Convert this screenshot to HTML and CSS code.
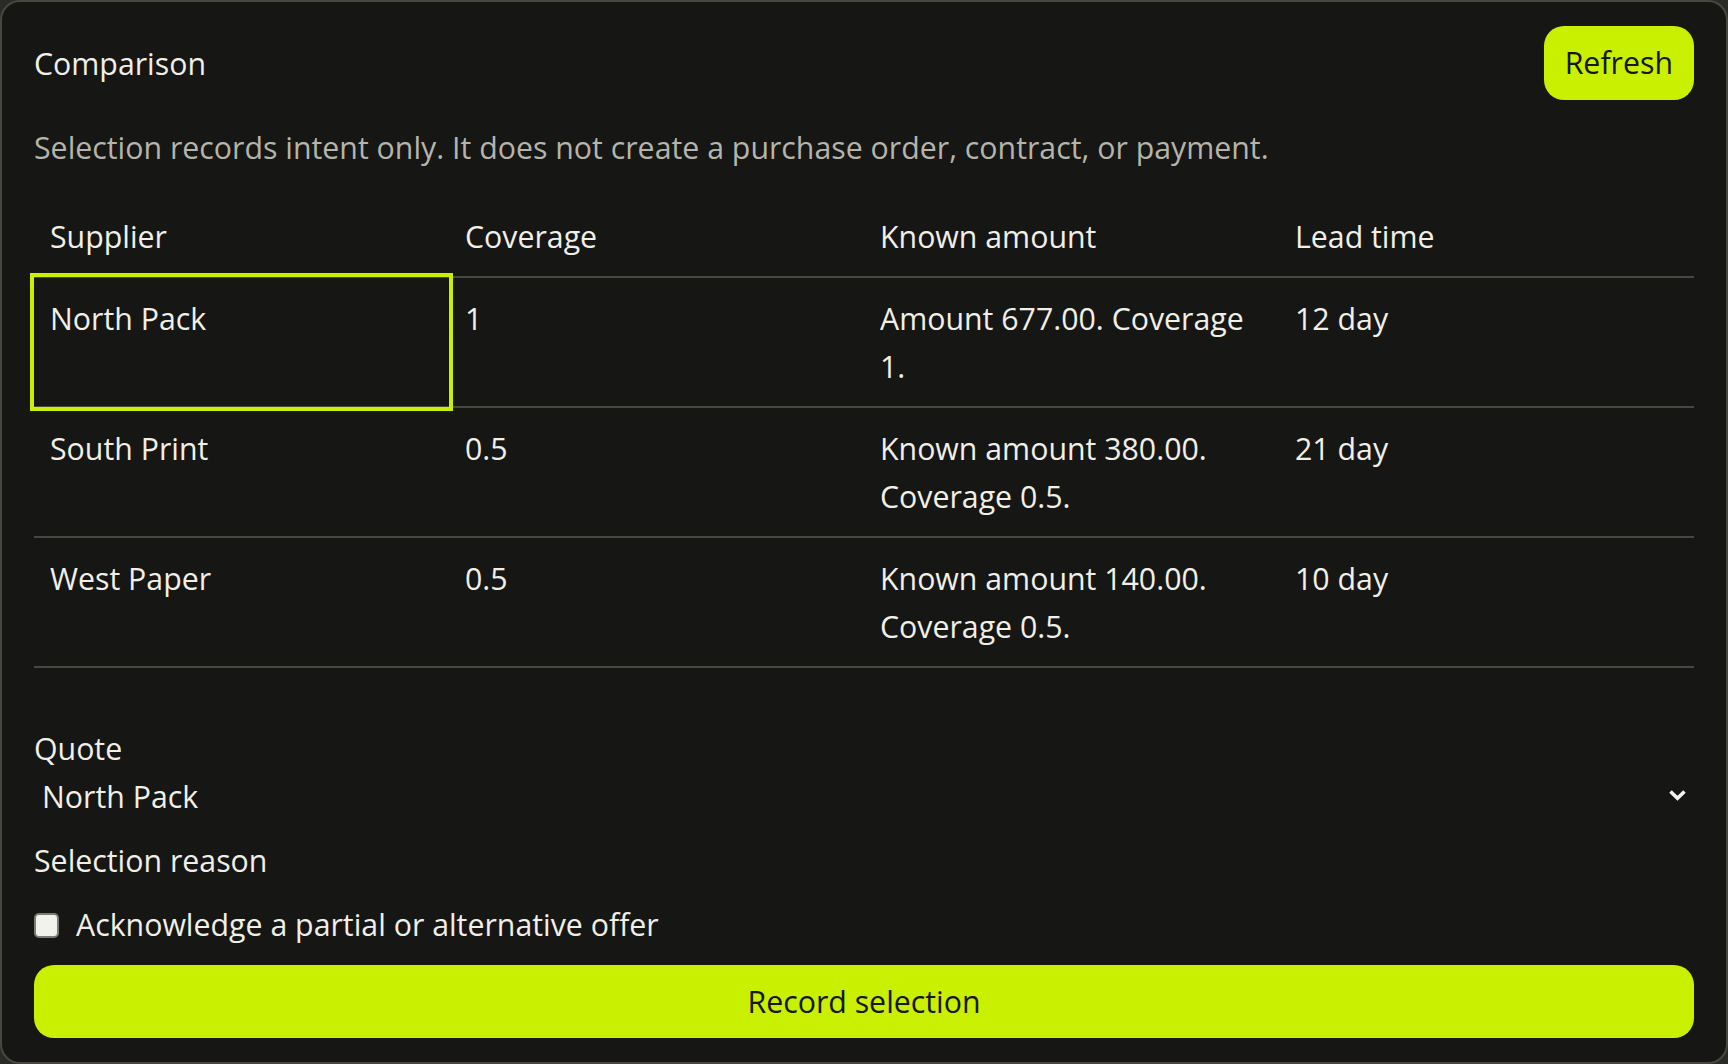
FILE: index.html
```html
<!DOCTYPE html>
<html lang="en">
<head>
  <meta charset="UTF-8">
  <meta name="viewport" content="width=device-width, initial-scale=1.0">
  <title>Comparison</title>
  <link rel="stylesheet" href="styles.css">
</head>
<body>
  <section class="panel">
    <header class="panel-head">
      <h2 class="panel-title">Comparison</h2>
      <button type="button" class="btn btn-refresh">Refresh</button>
    </header>

    <p class="note">Selection records intent only. It does not create a purchase order, contract, or payment.</p>

    <table class="compare">
      <thead>
        <tr>
          <th>Supplier</th>
          <th>Coverage</th>
          <th>Known amount</th>
          <th>Lead time</th>
        </tr>
      </thead>
      <tbody>
        <tr>
          <td class="is-focused" tabindex="0">North Pack</td>
          <td>1</td>
          <td>Amount 677.00. Coverage 1.</td>
          <td>12 day</td>
        </tr>
        <tr>
          <td>South Print</td>
          <td>0.5</td>
          <td>Known amount 380.00. Coverage 0.5.</td>
          <td>21 day</td>
        </tr>
        <tr>
          <td>West Paper</td>
          <td>0.5</td>
          <td>Known amount 140.00. Coverage 0.5.</td>
          <td>10 day</td>
        </tr>
      </tbody>
    </table>

    <form class="select-form" onsubmit="return false">
      <label class="field">
        <span class="field-name">Quote</span>
        <span class="select-wrap">
          <select name="quote">
            <option>North Pack</option>
            <option>South Print</option>
            <option>West Paper</option>
          </select>
          <svg class="chevron" viewBox="0 0 19 12" width="19" height="12" aria-hidden="true">
            <path d="M2.5 2.5 L9.5 9.2 L16.5 2.5" fill="none" stroke="#f4f4ee" stroke-width="3.6"/>
          </svg>
        </span>
      </label>
      <label class="field-label">Selection reason</label>
      <label class="check">
        <input type="checkbox" name="partial">
        <span>Acknowledge a partial or alternative offer</span>
      </label>
      <button type="submit" class="btn btn-primary">Record selection</button>
    </form>
  </section>
</body>
</html>
```

FILE: styles.css
```css
* {
  box-sizing: border-box;
}
body {
  margin: 0;
  background: #2a2a27;
  font-family: "Open Sans", "Noto Sans", sans-serif;
  font-size: 30.3px;
  line-height: 48px;
  color: #f0efe8;
}
.panel {
  height: 100vh;
  padding: 24px 32px;
  background: #161614;
  border: 2px solid #48483f;
  border-radius: 20px;
}
.panel-head {
  display: flex;
  align-items: center;
  justify-content: space-between;
}
.panel-title {
  margin: 0;
  padding-top: 2px;
  font-size: inherit;
  font-weight: normal;
}
.btn {
  font: inherit;
  line-height: 49px;
  border: none;
  border-radius: 20px;
  background: #c8f000;
  color: #161614;
  cursor: pointer;
}
.btn-refresh {
  padding: 12px 21px 13px;
}
.note {
  margin: 24px 0 0;
  color: #b5b4ab;
}
.compare {
  width: 100%;
  margin-top: 24px;
  border-collapse: collapse;
  table-layout: fixed;
}
.compare th,
.compare td {
  padding: 17px 16px 15px;
  text-align: left;
  vertical-align: top;
  font-weight: normal;
  border-bottom: 2px solid #48483f;
}
.compare td.is-focused {
  outline: 4px solid #c8f000;
}
.select-form {
  display: flex;
  flex-direction: column;
  gap: 16px;
  margin-top: 55px;
}
.field {
  display: flex;
  flex-direction: column;
}
.field-name {
  padding-top: 2px;
}
.select-wrap {
  position: relative;
  display: block;
}
.select-wrap select {
  appearance: none;
  width: 100%;
  height: 48px;
  padding: 0 8px;
  border: none;
  background: transparent;
  color: inherit;
  font: inherit;
  line-height: 48px;
}
.select-wrap .chevron {
  position: absolute;
  right: 7px;
  top: 16px;
  pointer-events: none;
}
.check {
  display: flex;
  align-items: center;
  gap: 17px;
}
.check input {
  appearance: none;
  width: 25px;
  height: 25px;
  margin: 0;
  background: #f2f2ec;
  border: 2px solid #7c7c76;
  border-radius: 5px;
}
.btn-primary {
  width: 100%;
  padding: 12px;
}
```
